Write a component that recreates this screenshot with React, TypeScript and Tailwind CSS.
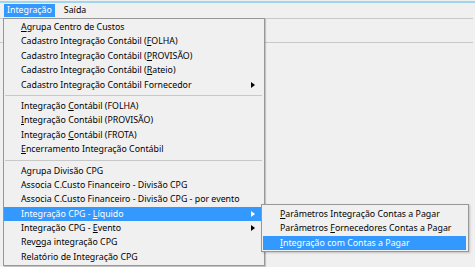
import React from "react";

type Item = { label: string; arrow?: boolean; active?: boolean } | "sep";

const mainItems: Item[] = [
    { label: "&Agrupa Centro de Custos" },
    { label: "Cadastro Integração Contábil (&FOLHA)" },
    { label: "Cadastro Integração Contábil (&PROVISÃO)" },
    { label: "Cadastro Integração Contábil (&Rateio)" },
    { label: "Cadastro Integração Contábil Fornecedor", arrow: true },
    "sep",
    { label: "Integração &Contábil (FOLHA)" },
    { label: "&Integração Contábil (PROVISÃO)" },
    { label: "Integração &Contábil (FROTA)" },
    { label: "&Encerramento Integração Contábil" },
    "sep",
    { label: "Agrupa Divisão CPG" },
    { label: "Associa C.Custo Financeiro - Divisão CPG" },
    { label: "Associa C.Custo Financeiro - Divisão CPG - por evento" },
    { label: "Integração CPG - &Líquido", arrow: true, active: true },
    { label: "Integração CPG - &Evento", arrow: true },
    { label: "Rev&oga integração CPG" },
    { label: "Relatório de Integração CPG" },
];

const subItems: Item[] = [
    { label: "&Parâmetros Integração Contas a Pagar" },
    { label: "Parâmetros &Fornecedores Contas a Pagar" },
    { label: "&Integração com Contas a Pagar", active: true },
];

function Label({ text }: { text: string }) {
    const i = text.indexOf("&");
    if (i < 0) return <span>{text}</span>;
    return (
        <span>
            {text.slice(0, i)}
            <span className="underline underline-offset-[1px]">{text[i + 1]}</span>
            {text.slice(i + 2)}
        </span>
    );
}

function Arrow({ white }: { white?: boolean }) {
    return (
        <svg width="4" height="6" viewBox="0 0 4 6" className="absolute right-[7px] top-[4px]">
            <path d="M0 0 L4 3 L0 6 Z" fill={white ? "#ffffff" : "#000000"} />
        </svg>
    );
}

function Rows({ items, pl }: { items: Item[]; pl: string }) {
    return (
        <>
            {items.map((it, idx) =>
                it === "sep" ? (
                    <div key={idx} className="h-[7px] flex items-center pl-px pr-[2px]">
                        <div className="h-px w-full bg-[#c8c8c8]" />
                    </div>
                ) : (
                    <div
                        key={idx}
                        className={`relative h-[14.4px] leading-[14.4px] mr-[2px] whitespace-nowrap ${pl} ${
                            it.active ? "bg-[#3399ff] text-white" : "text-black"
                        }`}
                    >
                        <Label text={it.label} />
                        {it.arrow && <Arrow white={it.active} />}
                    </div>
                )
            )}
        </>
    );
}

export default function App() {
    return (
        <div className="w-[475px] h-[267px] bg-[#f0f0f0] relative overflow-hidden font-['Noto_Sans',Arial,sans-serif] text-[8.8px] text-black">
            <div className="h-px bg-[#f0f0f0]" />
            <div className="h-[2px] bg-[#9fd6ee]" />
            <div className="h-[15px] flex items-start pl-[4px]">
                <div className="h-[13px] mt-px px-[3px] leading-[13px] bg-[#3399ff] text-white">Integração</div>
                <div className="h-[13px] mt-px px-[9px] leading-[13px]">Saída</div>
            </div>
            <div className="h-[25px] mr-[2px] border-t border-b border-[#c9c9c9]" />

            <div className="absolute left-[3px] top-[18px] w-[262px] h-[248px] bg-[#f0f0f0] border border-[#979797] shadow-[1px_1px_1px_rgba(0,0,0,0.18)] pt-px">
                <Rows items={mainItems} pl="pl-[17px]" />
            </div>

            <div className="absolute left-[261px] top-[204px] w-[208px] h-[48px] bg-[#f0f0f0] border border-[#979797] shadow-[1px_1px_2px_rgba(0,0,0,0.2)] pt-[2px] pl-px">
                <Rows items={subItems} pl="pl-[17px]" />
            </div>
        </div>
    );
}
